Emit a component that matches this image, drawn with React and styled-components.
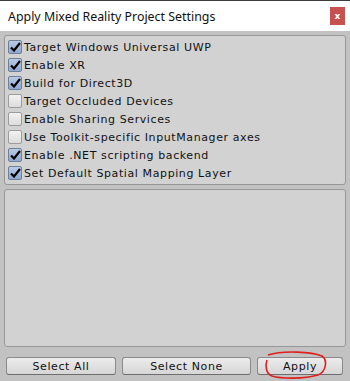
import React from 'react';
import styled, { createGlobalStyle } from 'styled-components';

const GlobalStyle = createGlobalStyle`
  html, body {
    margin: 0;
    padding: 0;
    background: #c2c2c2;
  }
`

const Window = styled.div`
  width: 350px;
  height: 381px;
  display: flex;
  flex-direction: column;
  border-top: 1px solid #3c3c3c;
  box-sizing: border-box;
  background: #c2c2c2;
  overflow: hidden;
`

const TitleBar = styled.div`
  height: 30px;
  flex: none;
  background: #fff;
  display: flex;
  align-items: center;
  justify-content: space-between;
  padding: 0 5px 0 8px;
`

const Title = styled.span`
  font-family: "Noto Sans", "Liberation Sans", sans-serif;
  font-size: 12.4px;
  color: #111;
`

const CloseButton = styled.div`
  width: 15px;
  height: 18px;
  background: #c75050;
  color: #fff;
  font-family: "DejaVu Sans", sans-serif;
  font-weight: bold;
  font-size: 9px;
  display: flex;
  align-items: center;
  justify-content: center;
`

const Content = styled.div`
  flex: 1;
  display: flex;
  flex-direction: column;
  gap: 4px;
  padding: 4px 4px 0 4px;
`

const Box = styled.div`
  background: #d2d2d2;
  border: 1px solid #979797;
  border-radius: 3px;
  flex: ${p => (p.$grow ? 1 : 'none')};
  padding: ${p => (p.$grow ? 0 : '2px 0')};
`

const Row = styled.div`
  height: 18px;
  display: flex;
  align-items: center;
  gap: 2px;
  padding-left: 3px;
  font-family: "DejaVu Sans", sans-serif;
  font-size: 11px;
  letter-spacing: 0.6px;
  color: #111;
  white-space: nowrap;
`

const Check = styled.span`
  width: 12px;
  height: 12px;
  border: 1px solid ${p => (p.$on ? '#6f7f96' : '#9c9c9c')};
  border-radius: 2px;
  background: ${p => (p.$on
    ? 'linear-gradient(#b9cbe6, #8ea9d1)'
    : 'linear-gradient(#f2f2f2, #dcdcdc)')};
  display: flex;
  align-items: center;
  justify-content: center;
  flex: none;
`

const ButtonBar = styled.div`
  height: 30px;
  flex: none;
  display: flex;
  align-items: center;
  gap: 6px;
  padding-left: 2px;
`

const Button = styled.div`
  position: relative;
  width: ${p => p.$w}px;
  height: 18px;
  box-sizing: border-box;
  border: 1px solid #8a8a8a;
  border-bottom-color: #6e6e6e;
  border-radius: 3px;
  background: linear-gradient(#ececec, #d6d6d6);
  font-family: "DejaVu Sans", sans-serif;
  font-size: 11px;
  letter-spacing: 0.6px;
  color: #111;
  display: flex;
  align-items: center;
  justify-content: center;
`

const Scribble = styled.svg`
  position: absolute;
  left: 6px;
  top: -6px;
  overflow: visible;
`

const options = [
  ['Target Windows Universal UWP', true],
  ['Enable XR', true],
  ['Build for Direct3D', true],
  ['Target Occluded Devices', false],
  ['Enable Sharing Services', false],
  ['Use Toolkit-specific InputManager axes', false],
  ['Enable .NET scripting backend', true],
  ['Set Default Spatial Mapping Layer', true],
];

const Tick = () => (
  <svg width="11" height="10" viewBox="0 0 11 10">
    <path d="M1 5.5 L4 8.5 L10 1" fill="none" stroke="#000" strokeWidth="2.2" />
  </svg>
);

export default function App() {
  return (
    <>
      <GlobalStyle />
      <Window>
        <TitleBar>
          <Title>Apply Mixed Reality Project Settings</Title>
          <CloseButton>x</CloseButton>
        </TitleBar>
        <Content>
          <Box>
            {options.map(([label, on]) => (
              <Row key={label}>
                <Check $on={on}>{on && <Tick />}</Check>
                {label}
              </Row>
            ))}
          </Box>
          <Box $grow />
          <ButtonBar>
            <Button $w={110}>Select All</Button>
            <Button $w={129}>Select None</Button>
            <Button $w={86}>
              Apply
              <Scribble width="64" height="28" viewBox="0 0 64 28">
                <path
                  d="M4 3 C20 -2 48 0 58 4 C64 8 62 20 54 23 C40 27 18 27 8 24 C2 22 1 14 3 8"
                  fill="none"
                  stroke="#e0201e"
                  strokeWidth="1.6"
                />
              </Scribble>
            </Button>
          </ButtonBar>
        </Content>
      </Window>
    </>
  );
}
